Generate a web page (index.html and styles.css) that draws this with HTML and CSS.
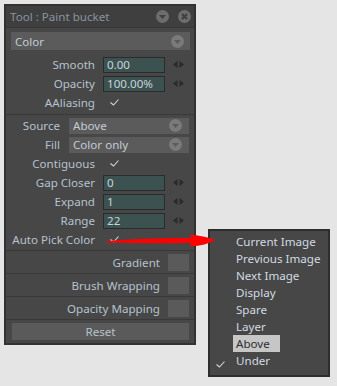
FILE: index.html
```html
<!DOCTYPE html>
<html lang="en">
<head>
  <meta charset="UTF-8" />
  <title>Tool : Paint bucket</title>
  <link rel="stylesheet" href="styles.css">
</head>
<body>

  <div class="panel">
    <div class="titlebar">
      <span class="title">Tool : Paint bucket</span>
      <span class="title-icons">
        <svg width="13" height="13" viewBox="0 0 13 13"><circle cx="6.5" cy="6.5" r="6.5" fill="#6d6d6d"/><polygon points="3,5 10,5 6.5,9" fill="#3f3f3f"/></svg>
        <svg width="13" height="13" viewBox="0 0 13 13"><circle cx="6.5" cy="6.5" r="6.5" fill="#6d6d6d"/><path d="M4 4 L9 9 M9 4 L4 9" stroke="#3f3f3f" stroke-width="2"/></svg>
      </span>
    </div>

    <div class="select select-wide">
      <span>Color</span>
      <svg width="13" height="13" viewBox="0 0 13 13"><circle cx="6.5" cy="6.5" r="6.5" fill="#7a7a7a"/><polygon points="3,5 10,5 6.5,9" fill="#5b5b5b"/></svg>
    </div>

    <!-- Smooth / Opacity -->
    <div class="group">
      <div class="row">
        <label>Smooth</label>
        <div class="field">0.00</div>
        <svg class="spin" width="11" height="7" viewBox="0 0 11 7"><polygon points="0,3.5 4.5,0 4.5,7" fill="#2a2a2a"/><polygon points="6.5,0 11,3.5 6.5,7" fill="#2a2a2a"/></svg>
      </div>
      <div class="row">
        <label>Opacity</label>
        <div class="field">100.00%</div>
        <svg class="spin" width="11" height="7" viewBox="0 0 11 7"><polygon points="0,3.5 4.5,0 4.5,7" fill="#2a2a2a"/><polygon points="6.5,0 11,3.5 6.5,7" fill="#2a2a2a"/></svg>
      </div>
      <div class="row">
        <label>AAliasing</label>
        <svg class="check" width="9" height="7" viewBox="0 0 9 7"><path d="M0.5 3.5 L3.5 6 L8.5 0.5" stroke="#cfd6dc" stroke-width="1.1" fill="none"/></svg>
      </div>
    </div>

    <!-- Fill options -->
    <div class="group group-fill">
      <div class="row">
        <label class="short">Source</label>
        <div class="select select-row">
          <span>Above</span>
          <svg width="13" height="13" viewBox="0 0 13 13"><circle cx="6.5" cy="6.5" r="6.5" fill="#7a7a7a"/><polygon points="3,5 10,5 6.5,9" fill="#5b5b5b"/></svg>
        </div>
      </div>
      <div class="row">
        <label class="short">Fill</label>
        <div class="select select-row">
          <span>Color only</span>
          <svg width="13" height="13" viewBox="0 0 13 13"><circle cx="6.5" cy="6.5" r="6.5" fill="#7a7a7a"/><polygon points="3,5 10,5 6.5,9" fill="#5b5b5b"/></svg>
        </div>
      </div>
      <div class="row">
        <label>Contiguous</label>
        <svg class="check" width="9" height="7" viewBox="0 0 9 7"><path d="M0.5 3.5 L3.5 6 L8.5 0.5" stroke="#cfd6dc" stroke-width="1.1" fill="none"/></svg>
      </div>
      <div class="row">
        <label>Gap Closer</label>
        <div class="field">0</div>
        <svg class="spin" width="11" height="7" viewBox="0 0 11 7"><polygon points="0,3.5 4.5,0 4.5,7" fill="#2a2a2a"/><polygon points="6.5,0 11,3.5 6.5,7" fill="#2a2a2a"/></svg>
      </div>
      <div class="row">
        <label>Expand</label>
        <div class="field">1</div>
        <svg class="spin" width="11" height="7" viewBox="0 0 11 7"><polygon points="0,3.5 4.5,0 4.5,7" fill="#2a2a2a"/><polygon points="6.5,0 11,3.5 6.5,7" fill="#2a2a2a"/></svg>
      </div>
      <div class="row">
        <label>Range</label>
        <div class="field">22</div>
        <svg class="spin" width="11" height="7" viewBox="0 0 11 7"><polygon points="0,3.5 4.5,0 4.5,7" fill="#2a2a2a"/><polygon points="6.5,0 11,3.5 6.5,7" fill="#2a2a2a"/></svg>
      </div>
      <div class="row">
        <label>Auto Pick Color</label>
        <svg class="check" width="9" height="7" viewBox="0 0 9 7"><path d="M0.5 3.5 L3.5 6 L8.5 0.5" stroke="#cfd6dc" stroke-width="1.1" fill="none"/></svg>
      </div>
    </div>

    <div class="toggle"><span>Gradient</span><span class="box"></span></div>
    <div class="toggle"><span>Brush Wrapping</span><span class="box"></span></div>
    <div class="toggle"><span>Opacity Mapping</span><span class="box"></span></div>

    <div class="reset">Reset</div>
  </div>

  <!-- Source menu, opened -->
  <div class="popup">
    <div class="item"><span class="gutter"></span><span class="text">Current Image</span></div>
    <div class="item"><span class="gutter"></span><span class="text">Previous Image</span></div>
    <div class="item"><span class="gutter"></span><span class="text">Next Image</span></div>
    <div class="item"><span class="gutter"></span><span class="text">Display</span></div>
    <div class="item"><span class="gutter"></span><span class="text">Spare</span></div>
    <div class="item"><span class="gutter"></span><span class="text">Layer</span></div>
    <div class="item"><span class="gutter"></span><span class="text selected">Above</span></div>
    <div class="item">
      <span class="gutter"><svg class="low" width="9" height="7" viewBox="0 0 9 7"><path d="M0.5 3.5 L3.5 6 L8.5 0.5" stroke="#cfd6dc" stroke-width="1.1" fill="none"/></svg></span>
      <span class="text">Under</span>
    </div>
  </div>

  <!-- red annotation arrow -->
  <svg class="arrow" width="337" height="386" viewBox="0 0 337 386">
    <path d="M107 241 Q150 237.5 191 238 L190 234.5 Q206 236 215.5 240 Q206 245.5 190 246.5 L191 243 Q150 243.5 107 242.5 Z" fill="#ff0000"/>
  </svg>

</body>
</html>
```

FILE: styles.css
```css
* {
  box-sizing: border-box;
}

body {
  margin: 0;
  height: 386px;
  position: relative;
  background: #e5e5e5;
  font-family: "Noto Sans", "Open Sans", sans-serif;
  font-size: 11.6px;
  color: #b6c2cd;
}

.panel {
  margin: 4px 0 0 4px;
  width: 192px;
  border: 2px solid #323232;
  background: #474747;
  padding-bottom: 3px;
}

.titlebar {
  height: 22px;
  display: flex;
  align-items: center;
  justify-content: space-between;
  padding: 0 3px 0 4px;
  background: #3f3f3f;
  border-bottom: 1px solid #363636;
}

.title {
  color: #8794a0;
}

.title-icons {
  display: flex;
  gap: 9px;
}

.title-icons svg {
  display: block;
}

.select {
  display: flex;
  align-items: center;
  justify-content: space-between;
  background: #5b5b5b;
  color: #c0ccd6;
  padding: 0 6px 0 4px;
}

.select svg {
  display: block;
}

.select-wide {
  margin: 4px 4px 0 5px;
  height: 18px;
}

.select-row {
  width: 120px;
  height: 16px;
  margin-left: 9px;
  padding-right: 7px;
}

.group {
  padding: 5px 0 2px;
  border-bottom: 1px solid #393939;
}

.group-fill {
  padding: 1px 0;
}

.row {
  display: flex;
  align-items: center;
  height: 19px;
}

.row label {
  width: 89px;
  text-align: right;
  white-space: nowrap;
}

.row label.short {
  width: 54px;
}

.field {
  width: 62px;
  height: 16px;
  margin-left: 8px;
  padding-left: 3px;
  background: #3c5250;
  border: 1px solid #2b2b2b;
  color: #c8d4dc;
  line-height: 14px;
}

.spin {
  display: block;
  margin-left: 8px;
}

.check {
  display: block;
  margin-left: 15px;
}

.toggle {
  display: flex;
  align-items: center;
  justify-content: flex-end;
  gap: 8px;
  height: 23px;
  padding-right: 5px;
  border-bottom: 1px solid #393939;
}

.toggle .box {
  width: 21px;
  height: 17px;
  background: #5a5a5a;
}

.reset {
  margin: 3px 5px 0 6px;
  height: 17px;
  line-height: 17px;
  text-align: center;
  background: #5a5a5a;
}

/* dropdown menu */
.popup {
  position: absolute;
  left: 208px;
  top: 229px;
  width: 122px;
  height: 148px;
  padding-top: 2px;
  background: #474747;
  border: 2px solid #2d2d2d;
  color: #d2dae2;
}

.item {
  display: flex;
  align-items: center;
  height: 17px;
}

.gutter {
  width: 23px;
  padding-left: 6px;
}

.gutter svg {
  display: block;
}

.gutter svg.low {
  margin-top: 8px;
}

.item .text {
  padding: 0 3px;
  line-height: 17px;
}

.item .text.selected {
  width: 47px;
  background: #c6c6c6;
  color: #2e2e2e;
}

.arrow {
  position: absolute;
  left: 0;
  top: 0;
  pointer-events: none;
}
```
